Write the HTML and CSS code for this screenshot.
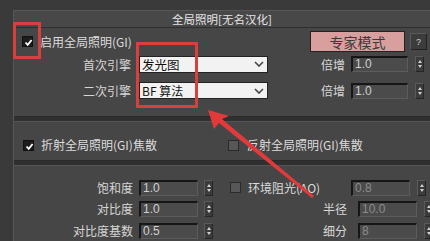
FILE: index.html
```html
<!DOCTYPE html>
<html lang="zh">
<head>
<meta charset="utf-8">
<link rel="stylesheet" href="styles.css">
</head>
<body>
<div class="frame">
  <div class="panel">
    <div class="title">全局照明[无名汉化]</div>
    <section class="sec gi">
      <div class="row r1">
        <span class="cb checked"><svg viewBox="0 0 11 11"><path d="M2.5 5.5 L4.7 7.8 L8.6 3" fill="none" stroke="#fff" stroke-width="1.8"/></svg></span>
        <span class="cbl">启用全局照明(GI)</span>
        <button class="expert">专家模式</button>
        <button class="help">?</button>
      </div>
      <div class="row r2">
        <span class="lbl lw">首次引擎</span>
        <div class="dd"><span>发光图</span><svg class="chev" viewBox="0 0 10 6"><path d="M1 1 L5 5 L9 1" fill="none" stroke="#444" stroke-width="1.6"/></svg></div>
        <span class="lbl mul">倍增</span>
        <div class="inp">1.0</div>
        <span class="spin"><i class="up"></i><i class="dn"></i></span>
      </div>
      <div class="row r3">
        <span class="lbl lw">二次引擎</span>
        <div class="dd"><span class="bf">BF 算法</span><svg class="chev" viewBox="0 0 10 6"><path d="M1 1 L5 5 L9 1" fill="none" stroke="#444" stroke-width="1.6"/></svg></div>
        <span class="lbl mul">倍增</span>
        <div class="inp">1.0</div>
        <span class="spin"><i class="up"></i><i class="dn"></i></span>
      </div>
    </section>
    <div class="sep"></div>
    <section class="sec caus">
      <div class="row">
        <span class="cb checked c2"><svg viewBox="0 0 11 11"><path d="M2.5 5.5 L4.7 7.8 L8.6 3" fill="none" stroke="#fff" stroke-width="1.8"/></svg></span>
        <span class="cbl">折射全局照明(GI)焦散</span>
        <span class="cb off c3"></span>
        <span class="cbl">反射全局照明(GI)焦散</span>
      </div>
    </section>
    <div class="sep"></div>
    <section class="sec ao">
      <div class="row a1">
        <span class="lbl lw2">饱和度</span>
        <div class="inp s">1.0</div>
        <span class="spin sp1"><i class="up"></i><i class="dn"></i></span>
        <span class="cb off c4"></span>
        <span class="cbl aol">环境阻光(AO)</span>
        <div class="inp s dim ai">0.8</div>
        <span class="spin"><i class="up"></i><i class="dn"></i></span>
      </div>
      <div class="row a2">
        <span class="lbl lw2">对比度</span>
        <div class="inp s">1.0</div>
        <span class="spin sp1"><i class="up"></i><i class="dn"></i></span>
        <span class="lbl rl">半径</span>
        <div class="inp s dim">10.0</div>
        <span class="spin"><i class="up"></i><i class="dn"></i></span>
      </div>
      <div class="row a3">
        <span class="lbl lw2">对比度基数</span>
        <div class="inp s">0.5</div>
        <span class="spin sp1"><i class="up"></i><i class="dn"></i></span>
        <span class="lbl rl">细分</span>
        <div class="inp s dim">8</div>
        <span class="spin"><i class="up"></i><i class="dn"></i></span>
      </div>
    </section>
  </div>
  <div class="mark m1"></div>
  <div class="mark m2"></div>
  <svg class="arrow" viewBox="0 0 430 241" width="430" height="241">
    <polygon points="208,110 229,116 222,119 314,196 312,198 219,123 214,129" fill="#e23a3a"/>
  </svg>
</div>
</body>
</html>
```

FILE: styles.css
```css
* { box-sizing: border-box; }
html, body { margin: 0; padding: 0; }
body {
  width: 430px;
  height: 241px;
  overflow: hidden;
  background: #3a3a3a;
  font-family: "Noto Sans CJK SC", "Liberation Sans", sans-serif;
  font-size: 12px;
  color: #d6d6d6;
}
.frame {
  position: relative;
  width: 430px;
  height: 241px;
  padding-top: 10px;
  padding-left: 13px;
}
.panel {
  background: #464646;
  border-top: 1px solid #565656;
  border-left: 1px solid #565656;
  height: 231px;
}
.title {
  height: 17px;
  line-height: 16px;
  text-align: center;
  font-size: 11.5px;
  color: #e4e4e4;
  border-bottom: 1px solid #2e2e2e;
  background: #484848;
}
.row { display: flex; align-items: center; }
.gi { height: 85px; }
.r1 { margin-top: 3px; height: 21px; }
.r2 { margin-top: 3px; height: 18px; }
.r3 { margin-top: 9px; height: 17px; }
.cb {
  width: 11px; height: 11px;
  display: inline-block;
  flex: none;
}
.cb svg { display: block; width: 11px; height: 11px; }
.cb.checked { background: #1c1c1c; border: 1px solid #111; }
.cb.off { background: #575757; border: 1px solid #2a2a2a; }
.r1 .cb { margin-left: 8px; }
.cbl { margin-left: 7px; line-height: 14px; color: #dcdcdc; }
.expert {
  margin-left: auto;
  width: 95px; height: 21px;
  background: #d99e9e;
  border: 1px solid #222;
  color: #3a3a3a;
  font-family: inherit;
  font-size: 14px;
  line-height: 18px;
  padding: 0;
}
.help {
  margin-left: 5px;
  margin-right: 3px;
  width: 17px; height: 17px;
  background: #3c3c3c;
  border: 1px solid #222;
  border-top-color: #5a5a5a;
  border-left-color: #5a5a5a;
  color: #cfcfcf;
  font-family: "Liberation Sans", sans-serif;
  font-size: 9px;
  padding: 0;
}
.lbl { text-align: right; flex: none; color: #d6d6d6; }
.lw { width: 117px; }
.dd {
  margin-left: 8px;
  width: 129px; height: 17px;
  background: #f2f2f2;
  border: 1px solid #222;
  color: #111;
  display: flex; align-items: center;
  padding-left: 2px;
  font-size: 12.5px;
}
.dd .bf { font-size: 12px; }
.chev { width: 10px; height: 6px; margin-left: auto; margin-right: 3px; }
.mul { width: 24px; margin-left: 53px; }
.inp {
  margin-left: 6px;
  width: 57px; height: 16px;
  background: #4b4b4b;
  border: 1px solid #5c5c5c;
  border-top: 2px solid #161616;
  border-left: 2px solid #161616;
  color: #cfcfcf;
  font-family: "Liberation Sans", sans-serif;
  font-size: 12px;
  line-height: 12px;
  padding-left: 2px;
  flex: none;
}
.inp.s { width: 59px; }
.inp.dim { color: #8c8c8c; }
.spin {
  margin-left: 7px;
  width: 9px; height: 16px;
  background: #3b3b3b;
  border: 1px solid #262626;
  border-top-color: #5a5a5a;
  border-left-color: #5a5a5a;
  display: flex; flex-direction: column; align-items: center; justify-content: center;
  gap: 2px;
  flex: none;
}
.spin i { display: block; width: 0; height: 0; border-left: 2.5px solid transparent; border-right: 2.5px solid transparent; }
.spin .up { border-bottom: 3px solid #d0d0d0; }
.spin .dn { border-top: 3px solid #d0d0d0; }
.sep {
  height: 6px;
  background: #303030;
  border-top: 1px solid #2a2a2a;
  border-bottom: 1px solid #555;
}
.caus { height: 38px; padding-top: 16px; }
.caus .c2 { margin-left: 9px; }
.caus .c3 { margin-left: 71px; }
.caus .c3 + .cbl { margin-left: 8px; }
.ao { padding-top: 13px; }
.a1 { height: 17px; }
.a2 { height: 17px; margin-top: 4px; }
.a3 { height: 17px; margin-top: 5px; }
.lw2 { width: 119px; }
.sp1 { margin-left: 6px; }
.c4 { margin-left: 17px; }
.aol { width: 97px; flex: none; }
.ai { margin-left: 6px; }
.rl { width: 26px; margin-left: 108px; }
.a2 .inp.dim, .a3 .inp.dim { margin-left: 11px; }
.mark {
  position: absolute;
  border: 3px solid #d8403f;
}
.m1 { left: 13px; top: 22px; width: 28px; height: 37px; }
.m2 { left: 136px; top: 42px; width: 62px; height: 66px; }
.arrow { position: absolute; left: 0; top: 0; }
```
